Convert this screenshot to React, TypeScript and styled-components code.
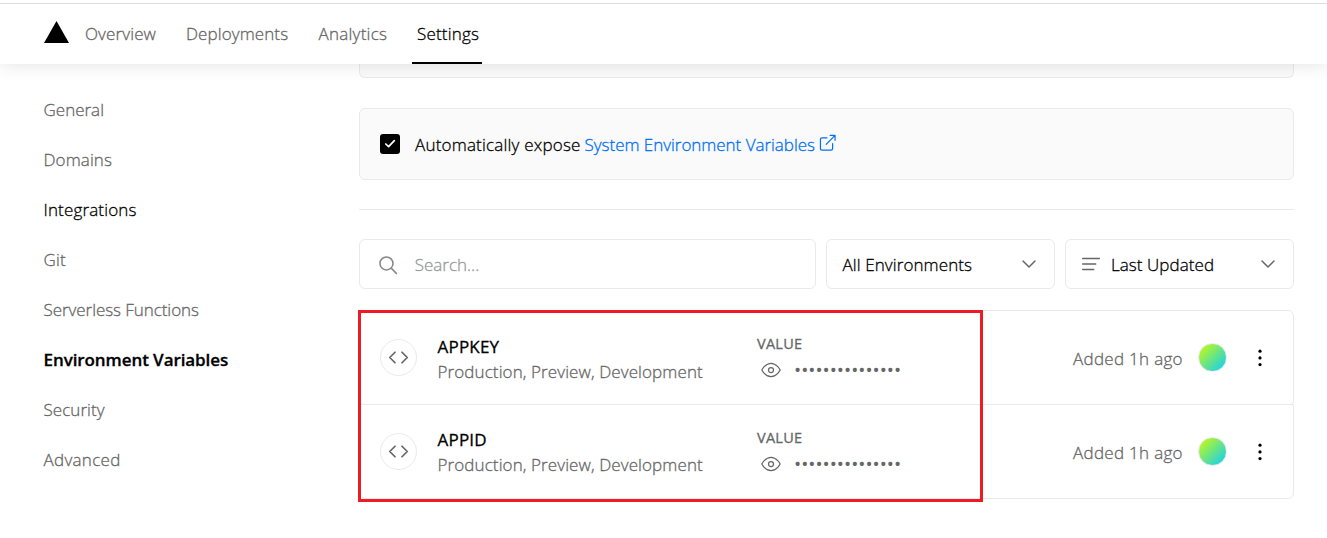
import React from 'react';
import styled, { createGlobalStyle } from 'styled-components';

const GlobalStyle = createGlobalStyle`
  * { box-sizing: border-box; }
  body {
    margin: 0;
    background: #fff;
    color: #000;
    font: 300 17px/24px "Open Sans", "Noto Sans", sans-serif;
    overflow: hidden;
  }
`;

const Text = styled.span<{ $track?: number }>`
  letter-spacing: ${(p) => p.$track ?? 0}px;
  -webkit-text-stroke: 0.3px currentColor;
  white-space: nowrap;
`;

const Page = styled.div`
  height: 538px;
  padding-top: 3px;
`;

const Header = styled.header`
  position: relative;
  z-index: 1;
  display: flex;
  height: 61px;
  padding-left: 44px;
  border-top: 1px solid #dcdcdc;
  background: #fff;
  box-shadow: 0 0 18px rgba(0, 0, 0, 0.12);
  clip-path: inset(0 0 -24px 0);
`;

const Logo = styled.svg`
  width: 25px;
  height: 22px;
  margin-top: 17px;
`;

const Nav = styled.nav`
  display: flex;
  margin-left: 11px;
`;

const NavItem = styled.a<{ $active?: boolean; $width: number }>`
  width: ${(p) => p.$width}px;
  padding-left: 5px;
  line-height: 59px;
  color: ${(p) => (p.$active ? '#000' : '#666')};
  border-bottom: 2px solid ${(p) => (p.$active ? '#000' : 'transparent')};
`;

const Body = styled.div`
  display: flex;
`;

const Sidebar = styled.aside`
  display: flex;
  flex-direction: column;
  width: 359px;
  padding: 21px 0 0 43.5px;
`;

const SideItem = styled.a<{ $tone?: 'dark' | 'active' }>`
  height: 50px;
  line-height: 50px;
  color: ${(p) => (p.$tone ? '#000' : '#666')};
  font-weight: ${(p) => (p.$tone === 'active' ? 600 : 300)};
`;

const Content = styled.main`
  width: 935px;
`;

const PreviousCard = styled.div`
  height: 14px;
  border: 1px solid #eaeaea;
  border-top: 0;
  border-radius: 0 0 6px 6px;
  background: #fafafa;
`;

const ExposeCard = styled.div`
  display: flex;
  align-items: center;
  height: 72px;
  margin-top: 30px;
  padding-left: 20px;
  border: 1px solid #eaeaea;
  border-radius: 6px;
  background: #fafafa;
`;

const Checkbox = styled.svg`
  width: 20px;
  height: 20px;
  margin-right: 15px;
  border-radius: 3px;
  background: #000;
`;

const ExposeText = styled.div`
  display: flex;
  padding-top: 2px;
`;

const Link = styled.a`
  display: flex;
  margin-left: 4px;
  color: #0070f3;
`;

const Divider = styled.hr`
  height: 1px;
  margin: 29px 0;
  border: 0;
  background: #eaeaea;
`;

const Filters = styled.div`
  display: grid;
  grid-template-columns: 457px 229px 229px;
  gap: 10px;
`;

const Field = styled.div<{ $left: number }>`
  display: flex;
  align-items: center;
  height: 50px;
  padding: 0 13.5px 0 ${(p) => p.$left}px;
  border: 1px solid #eaeaea;
  border-radius: 6px;
`;

const FieldLabel = styled.div<{ $muted?: boolean; $gap?: number }>`
  flex: 1;
  padding-top: 2px;
  margin-left: ${(p) => p.$gap ?? 0}px;
  color: ${(p) => (p.$muted ? '#999' : '#000')};
`;

const Icon = styled.svg<{ $size: number; $color?: string }>`
  flex: none;
  width: ${(p) => p.$size}px;
  height: ${(p) => p.$size}px;
  fill: none;
  stroke: ${(p) => p.$color ?? '#666'};
  stroke-width: 1.5;
  stroke-linecap: round;
  stroke-linejoin: round;
`;

const ExternalIcon = styled(Icon)`
  margin: 0 0 0 3px;
`;

const List = styled.div`
  position: relative;
  margin-top: 21px;
`;

const Highlight = styled.div`
  position: absolute;
  top: 0;
  left: -1px;
  width: 625px;
  height: 192px;
  border: 3px solid #ed1c24;
`;

const Row = styled.div`
  display: flex;
  align-items: flex-start;
  height: 95px;
  padding-left: 20px;
  border: 1px solid #eaeaea;
  border-radius: 6px 6px 4px 4px;
  & + & {
    margin-top: -1px;
    border-radius: 0 0 6px 6px;
  }
`;

const Badge = styled.div`
  display: grid;
  place-items: center;
  width: 37px;
  height: 37px;
  margin-top: 28px;
  border: 1px solid #eaeaea;
  border-radius: 50%;
`;

const NameCell = styled.div<{ $top: number }>`
  display: flex;
  flex-direction: column;
  width: 319.5px;
  margin: ${(p) => p.$top}px 0 0 20.5px;
  line-height: 25px;
  color: #666;
`;

const Name = styled(Text)`
  color: #000;
  font-weight: 400;
`;

const ValueCell = styled.div`
  width: 316px;
  margin-top: 23px;
  color: #666;
`;

const ValueLabel = styled.div`
  font-size: 14.5px;
  font-weight: 400;
  line-height: 20px;
`;

const Secret = styled.div`
  display: flex;
  align-items: center;
  height: 24px;
  margin: 4px 0 0 4px;
`;

const Mask = styled.span`
  margin-left: 13px;
  font-size: 19px;
  font-weight: 400;
`;

const Added = styled.div`
  width: 125px;
  margin-top: 36px;
  color: #666;
`;

const Avatar = styled.div<{ $top: number }>`
  width: 29px;
  height: 29px;
  margin-top: ${(p) => p.$top}px;
  border: 1px solid #eaeaea;
  border-radius: 50%;
  background: linear-gradient(135deg, #c6fb10 5%, #10cff5 95%);
`;

const Menu = styled.svg`
  width: 6px;
  height: 20px;
  margin: 36.5px 0 0 30px;
`;

const navItems = [
  { label: 'Overview', width: 101, track: 0.12 },
  { label: 'Deployments', width: 132.5, track: 0.1 },
  { label: 'Analytics', width: 98.5, track: 0.25 },
  { label: 'Settings', width: 70, track: 0.19, active: true },
];

const sideItems: { label: string; track: number; tone?: 'dark' | 'active' }[] = [
  { label: 'General', track: 0 },
  { label: 'Domains', track: 0.1 },
  { label: 'Integrations', track: 0.15, tone: 'dark' },
  { label: 'Git', track: 0.2 },
  { label: 'Serverless Functions', track: -0.06 },
  { label: 'Environment Variables', track: -0.08, tone: 'active' },
  { label: 'Security', track: 0.05 },
  { label: 'Advanced', track: 0.3 },
];

const variables = [
  { name: 'APPKEY', top: 23, avatarTop: 32 },
  { name: 'APPID', top: 22, avatarTop: 32 },
];

const Chevron = () => (
  <Icon $size={24} viewBox="0 0 24 24">
    <path d="M6 9l6 6 6-6" />
  </Icon>
);

export default function App() {
  return (
    <Page>
      <GlobalStyle />
      <Header>
        <Logo viewBox="0 0 25 22">
          <path d="M12.5 0L25 22H0z" />
        </Logo>
        <Nav>
          {navItems.map((n) => (
            <NavItem key={n.label} $width={n.width} $active={n.active}>
              <Text $track={n.track}>{n.label}</Text>
            </NavItem>
          ))}
        </Nav>
      </Header>
      <Body>
        <Sidebar>
          {sideItems.map((s) => (
            <SideItem key={s.label} $tone={s.tone}>
              <Text $track={s.track}>{s.label}</Text>
            </SideItem>
          ))}
        </Sidebar>
        <Content>
          <PreviousCard />
          <ExposeCard>
            <Checkbox viewBox="0 0 20 20" fill="none" stroke="#fff" strokeWidth="1.7">
              <path d="M14.3 6.6L8.6 12.6 5.8 10" strokeLinecap="round" strokeLinejoin="round" />
            </Checkbox>
            <ExposeText>
              <Text $track={0.2}>Automatically expose</Text>
              <Link>
                <Text $track={-0.03}>System Environment Variables</Text>
                <ExternalIcon $size={19.5} $color="#0070f3" viewBox="0 0 24 24">
                  <path d="M18 13v6a2 2 0 01-2 2H5a2 2 0 01-2-2V8a2 2 0 012-2h6M15 3h6v6M10 14L21 3" />
                </ExternalIcon>
              </Link>
            </ExposeText>
          </ExposeCard>
          <Divider />
          <Filters>
            <Field $left={15}>
              <Icon $size={25} $color="#888" viewBox="0 0 24 24">
                <path d="M11 17.25a6.25 6.25 0 110-12.5 6.25 6.25 0 010 12.5zM16 16l4.5 4.5" />
              </Icon>
              <FieldLabel $muted $gap={14.7}>
                <Text>Search...</Text>
              </FieldLabel>
            </Field>
            <Field $left={15.5}>
              <FieldLabel>
                <Text $track={0.1}>All Environments</Text>
              </FieldLabel>
              <Chevron />
            </Field>
            <Field $left={15}>
              <Icon $size={20} viewBox="0 0 20 20">
                <path d="M1.7 4.4h16.6M1.7 10h13M1.7 15.6h11" />
              </Icon>
              <FieldLabel $gap={10}>
                <Text $track={0.06}>Last Updated</Text>
              </FieldLabel>
              <Chevron />
            </Field>
          </Filters>
          <List>
            {variables.map((v) => (
              <Row key={v.name}>
                <Badge>
                  <Icon $size={21} viewBox="0 0 24 24">
                    <path strokeWidth="2" d="M16 18l6-6-6-6M8 6l-6 6 6 6" />
                  </Icon>
                </Badge>
                <NameCell $top={v.top}>
                  <Name $track={0.2}>{v.name}</Name>
                  <Text $track={0.1}>Production, Preview, Development</Text>
                </NameCell>
                <ValueCell>
                  <ValueLabel>
                    <Text $track={0.25}>VALUE</Text>
                  </ValueLabel>
                  <Secret>
                    <Icon $size={20} viewBox="0 0 24 24">
                      <path d="M1 12s4-8 11-8 11 8 11 8-4 8-11 8-11-8-11-8z" />
                      <circle cx="12" cy="12" r="3" />
                    </Icon>
                    <Mask>•••••••••••••••</Mask>
                  </Secret>
                </ValueCell>
                <Added>
                  <Text $track={0.3}>Added 1h ago</Text>
                </Added>
                <Avatar $top={v.avatarTop} />
                <Menu viewBox="0 0 6 20">
                  <circle cx="3" cy="3.2" r="1.6" />
                  <circle cx="3" cy="9.9" r="1.6" />
                  <circle cx="3" cy="16.6" r="1.6" />
                </Menu>
              </Row>
            ))}
            <Highlight />
          </List>
        </Content>
      </Body>
    </Page>
  );
}
